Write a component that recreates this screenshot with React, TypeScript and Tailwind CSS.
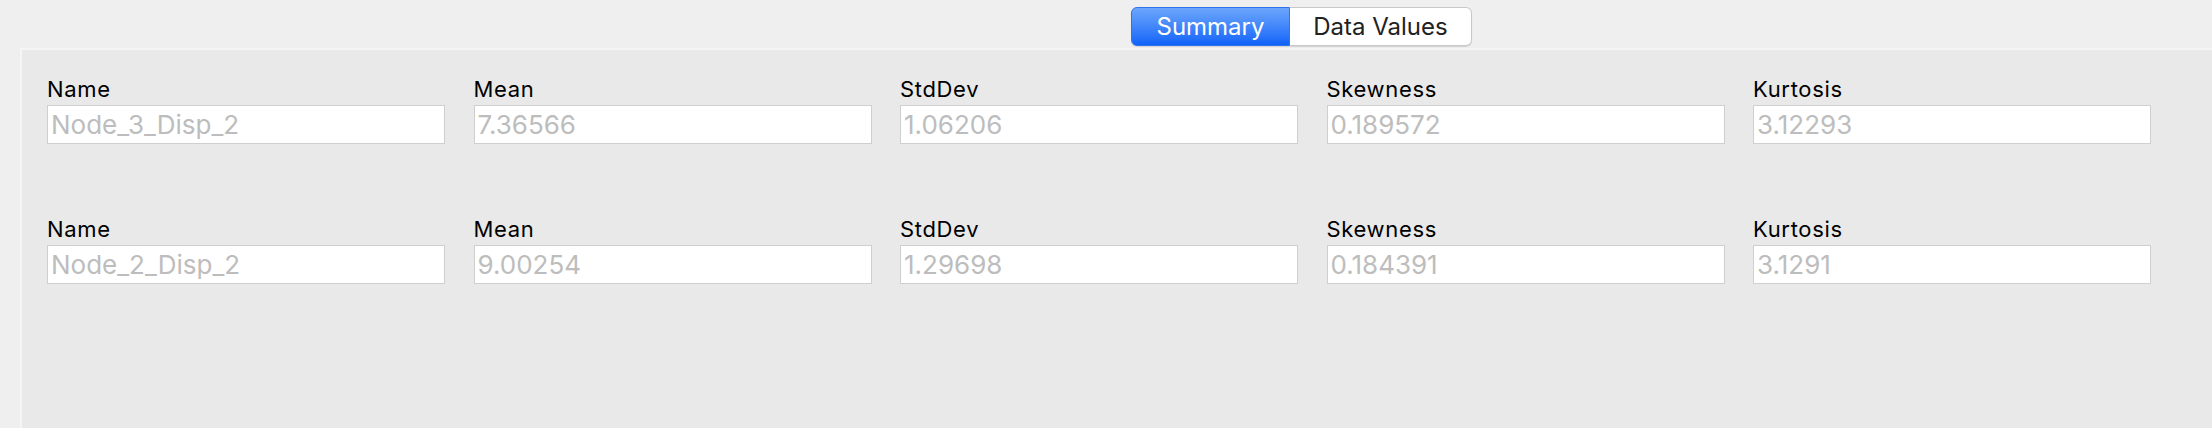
import React from 'react';

type Stat = { name: string; mean: string; std: string; skew: string; kurt: string };

const stats: Stat[] = [
  { name: 'Node_3_Disp_2', mean: '7.36566', std: '1.06206', skew: '0.189572', kurt: '3.12293' },
  { name: 'Node_2_Disp_2', mean: '9.00254', std: '1.29698', skew: '0.184391', kurt: '3.1291' },
];

const font = "font-['Inter','Liberation_Sans',sans-serif]";

const Field = ({ label, value }: { label: string; value: string }) => (
  <div className="flex flex-col">
    <span className={`${font} text-[22px] leading-[24px] tracking-[0.03em] text-black`}>{label}</span>
    <div className="mt-[4px] h-[39px] border border-[#cfcfcf] bg-white flex items-center pl-[3px] pt-[1px] overflow-hidden">
      <span className={`${font} text-[26px] leading-[30px] text-[#bdbdbd]`}>{value}</span>
    </div>
  </div>
);

export default function App() {
  return (
    <div className="w-[2212px] h-[428px] bg-[#efefef] flex flex-col overflow-hidden">
      {/* segmented control */}
      <div className="h-[48px] pl-[1131px] pt-[7px]">
        <div className="flex h-[39px] w-[341px] rounded-[6px] shadow-[0_1px_1px_rgba(0,0,0,0.12)]">
          <div className="w-[159px] flex items-center justify-center rounded-l-[6px] bg-gradient-to-b from-[#6ca5fc] to-[#0d63f8] border border-[#2f74ee]">
            <span className={`${font} text-[24px] text-white`}>Summary</span>
          </div>
          <div className="flex-1 flex items-center justify-center rounded-r-[6px] bg-white border border-l-0 border-[#c8c8c8]">
            <span className={`${font} text-[24px] text-[#222]`}>Data Values</span>
          </div>
        </div>
      </div>

      {/* stats panel */}
      <div className="ml-[20px] flex-1 bg-[#e9e9e9] border-l-2 border-t-2 border-[#f5f5f5] pl-[25px] pt-[27px] flex flex-col gap-y-[73px]">
        {stats.map((s) => (
          <div key={s.name} className="grid grid-cols-[repeat(5,398px)] gap-x-[28.5px]">
            <Field label="Name" value={s.name} />
            <Field label="Mean" value={s.mean} />
            <Field label="StdDev" value={s.std} />
            <Field label="Skewness" value={s.skew} />
            <Field label="Kurtosis" value={s.kurt} />
          </div>
        ))}
      </div>
    </div>
  );
}
